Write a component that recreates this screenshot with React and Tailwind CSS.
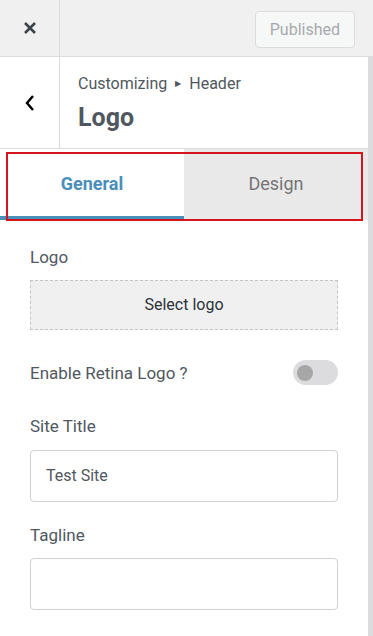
import React from "react";

export default function App() {
  return (
    <div className="w-[373px] h-[636px] overflow-hidden bg-[#dcdcde] font-['Roboto',sans-serif] text-[#50575e]">
      {/* top bar */}
      <div className="h-[57px] flex bg-[#f0f0f1] border-b border-[#dcdcde]">
        <div className="w-[60px] border-r border-[#dcdcde] flex items-center justify-center">
          <svg width="14" height="14" viewBox="0 0 14 14">
            <path d="M2 2 L12 12 M12 2 L2 12" stroke="#3c434a" strokeWidth="2.6" strokeLinecap="butt" />
          </svg>
        </div>
        <div className="flex-1 flex items-center justify-end pr-[18px] pt-[3px]">
          <button className="h-[37px] px-[14px] rounded-[4px] border border-[#dcdcde] bg-[#f6f7f7] text-[16px] text-[#a7aaad]">
            Published
          </button>
        </div>
      </div>

      {/* panel */}
      <div className="w-[368px] bg-white h-[579px]">
        <div className="h-[92px] flex border-b border-[#dcdcde]">
          <div className="w-[60px] border-r border-[#dcdcde] flex items-center justify-center">
            <svg width="12" height="18" viewBox="0 0 12 18">
              <path d="M9 2 L3 9 L9 16" stroke="#000" strokeWidth="2.4" fill="none" />
            </svg>
          </div>
          <div className="pl-[18px] pt-[17px]">
            <div className="text-[16px] leading-[20px] text-[#50575e] flex items-center gap-[8px]">
              <span>Customizing</span>
              <span className="text-[8px]">▶</span>
              <span>Header</span>
            </div>
            <div className="text-[25px] leading-[30px] font-bold text-[#50575e] mt-[9px]">Logo</div>
          </div>
        </div>

        {/* tabs */}
        <div className="relative h-[71px] flex">
          <div className="w-[184px] flex items-center justify-center border-b-[4px] border-[#4a8fba] text-[18px] font-bold text-[#4a8fba] pt-[2px]">
            General
          </div>
          <div className="flex-1 flex items-center justify-center bg-[#e9e9e9] text-[18px] text-[#757575] pb-[2px]">
            Design
          </div>
          <div className="absolute left-[6px] top-[3px] w-[357px] h-[69px] border-[2px] border-[#d4161c]"></div>
        </div>

        {/* fields */}
        <div className="px-[30px] pt-[27px]">
          <div className="text-[17px] leading-[20px] text-[#50575e]">Logo</div>
          <div className="mt-[13px] h-[50px] w-[308px] border border-dashed border-[#c3c4c7] bg-[#f0f0f1] flex items-center justify-center text-[16px] text-[#2c3338]">
            Select logo
          </div>

          <div className="mt-[30px] flex items-center justify-between">
            <div className="text-[17px] leading-[20px]">Enable Retina Logo ?</div>
            <div className="w-[45px] h-[25px] rounded-full bg-[#dcdcde] flex items-center px-[4px]">
              <div className="w-[16px] h-[16px] rounded-full bg-[#a7a7a7]"></div>
            </div>
          </div>

          <div className="mt-[31px] text-[17px] leading-[20px]">Site Title</div>
          <div className="mt-[14px] h-[52px] w-[308px] border border-[#d0d0d0] rounded-[4px] flex items-center pl-[15px] text-[16px] text-[#50575e]">
            Test Site
          </div>

          <div className="mt-[23px] text-[17px] leading-[20px]">Tagline</div>
          <div className="mt-[13px] h-[52px] w-[308px] border border-[#d0d0d0] rounded-[4px]"></div>
        </div>
      </div>
    </div>
  );
}
